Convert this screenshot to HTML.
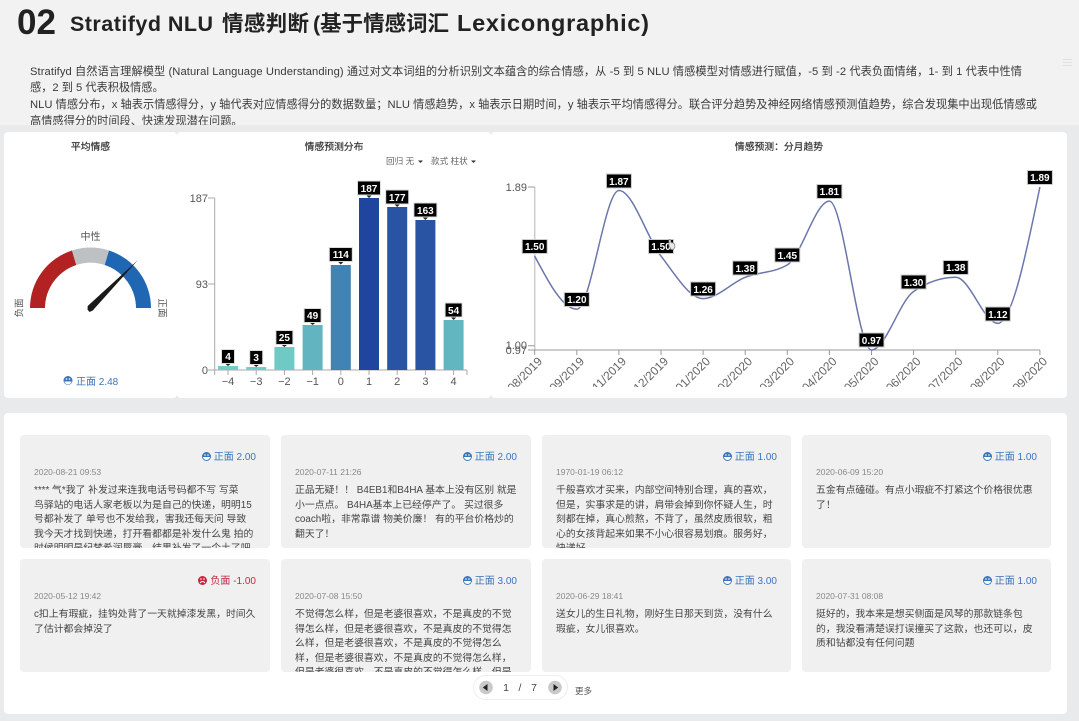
<!DOCTYPE html>
<html><head><meta charset="utf-8">
<style>
html,body{margin:0;padding:0;width:1079px;height:721px;overflow:hidden;background:#e9eaec}
body{font-family:"Liberation Sans","Noto Sans CJK SC",sans-serif;color:#333}
#r{position:relative;width:1079px;height:721px;overflow:hidden;filter:blur(.35px)}
.a{position:absolute;white-space:nowrap}
.top{left:0;top:0;width:1079px;height:125px;background:#f2f2f2;overflow:hidden}
.p{position:absolute;background:#fff;border-radius:4px}
.card{position:absolute;width:250px;height:113px;background:#f0f0f0;border-radius:4px;overflow:hidden}
.s{position:absolute;right:14px;top:16px;font-size:10px;line-height:13px;color:#3a75bd;white-space:nowrap}
.s svg{vertical-align:-1px;margin-right:3px}
.s.n{color:#c0293e}
.t{position:absolute;left:14px;top:31px;font-size:8.5px;line-height:12px;color:#888;white-space:nowrap}
.x{position:absolute;left:14px;top:49px;font-size:9.85px;line-height:14.6px;color:#444;white-space:nowrap}
</style></head><body>
<div id="r">
<div class="a top">
<svg class="a" style="left:0;top:0" width="1079" height="125" font-family="'Liberation Sans','Noto Sans CJK SC',sans-serif">
<text x="17" y="34" font-size="35" font-weight="700" fill="#222">02</text>
<g font-size="21.500" font-weight="700" fill="#222">
<text x="70" y="31" textLength="143" lengthAdjust="spacing">Stratifyd NLU</text>
<text x="222" y="31" textLength="87" lengthAdjust="spacing">情感判断</text>
<text x="313" y="31" textLength="136" lengthAdjust="spacing">(基于情感词汇</text>
<text x="457" y="31" font-size="23.500" textLength="192" lengthAdjust="spacing">Lexicongraphic)</text>
</g>
<g font-size="11.200" fill="#3a3a3a">
<text x="30" y="75" textLength="992" lengthAdjust="spacing">Stratifyd 自然语言理解模型 (Natural Language Understanding) 通过对文本词组的分析识别文本蕴含的综合情感，从 -5 到 5 NLU 情感模型对情感进行赋值，-5 到 -2 代表负面情绪，1- 到 1 代表中性情</text>
<text x="30" y="91">感，2 到 5 代表积极情感。</text>
<text x="30" y="108" textLength="1007" lengthAdjust="spacing">NLU 情感分布，x 轴表示情感得分，y 轴代表对应情感得分的数据数量；NLU 情感趋势，x 轴表示日期时间，y 轴表示平均情感得分。联合评分趋势及神经网络情感预测值趋势，综合发现集中出现低情感或</text>
<text x="30" y="124.500">高情感得分的时间段、快速发现潜在问题。</text>
</g>
<path d="M1063 59.500h9M1063 62.500h9M1063 65.500h9" stroke="#e0e0e0" stroke-width="1" fill="none"/>
</svg>
</div>

<div class="p" style="left:4px;top:132px;width:173px;height:266px"></div>
<div class="p" style="left:177px;top:132px;width:314px;height:266px"></div>
<div class="p" style="left:491px;top:132px;width:576px;height:266px"></div>
<div class="p" style="left:4px;top:413px;width:1063px;height:301px"></div>

<svg class="a" style="left:0;top:0" width="1079" height="410" font-family="'Liberation Sans','Noto Sans CJK SC',sans-serif">
<defs><clipPath id="c"><rect x="491" y="340" width="576" height="47"/></clipPath></defs>
<!-- titles -->
<g font-size="9.800" fill="#333" stroke="#333" stroke-width=".2" text-anchor="middle">
<text x="90.500" y="150">平均情感</text>
<text x="334" y="150">情感预测分布</text>
<text x="779" y="150">情感预测：分月趋势</text>
</g>
<text x="386" y="164" font-size="8.600" fill="#666">回归 无</text>
<path d="M418 160.500h5l-2.500 2.500z" fill="#333"/>
<text x="431" y="164" font-size="8.600" fill="#666">款式 柱状</text>
<path d="M471 160.500h5l-2.500 2.500z" fill="#333"/>

<!-- gauge -->
<path d="M30 308A60.500 60.500 0 0 1 72 250.500L76.300 265A45.500 45.500 0 0 0 45 308Z" fill="#b22222"/>
<path d="M72 250.500A60.500 60.500 0 0 1 109 250.500L104.700 265A45.500 45.500 0 0 0 76.300 265Z" fill="#bdc1c4"/>
<path d="M109 250.500A60.500 60.500 0 0 1 151 308H136A45.500 45.500 0 0 0 104.700 265Z" fill="#2067b3"/>
<path d="M138 260L92.700 310.500 89.500 312 87.500 309.500 87.700 306Z" fill="#1a1a1a"/>
<text x="90.500" y="240" font-size="10" fill="#555" text-anchor="middle">中性</text>
<text transform="translate(22.500 308) rotate(-90)" font-size="9.500" fill="#555" text-anchor="middle">负面</text>
<text transform="translate(159 308) rotate(90)" font-size="9.500" fill="#555" text-anchor="middle">正面</text>
<circle cx="68" cy="380.500" r="4.500" fill="#3a75bd"/><path d="M64.500 381.500h7a3.500 3 0 0 1-7 0z" fill="#fff"/><circle cx="66.500" cy="379" r=".8" fill="#fff"/><circle cx="69.500" cy="379" r=".8" fill="#fff"/>
<text x="76" y="385" font-size="10" fill="#3a75bd">正面 2.48</text>

<!-- bars -->
<path d="M214.700 198V370M208 198H214.700M208 284H214.700M208 370H467M228 370v5M256.200 370v5M284.400 370v5M312.600 370v5M340.800 370v5M369 370v5M397.200 370v5M425.400 370v5M453.600 370v5M214.700 370v5M467 370v5" stroke="#aaa" stroke-width="1" fill="none"/>
<g font-size="11" fill="#555" text-anchor="end"><text x="208" y="202">187</text><text x="208" y="288">93</text><text x="208" y="374">0</text></g>
<g font-size="11" fill="#555" text-anchor="middle"><text x="228" y="385">−4</text><text x="256.200" y="385">−3</text><text x="284.400" y="385">−2</text><text x="312.600" y="385">−1</text><text x="340.800" y="385">0</text><text x="369" y="385">1</text><text x="397.200" y="385">2</text><text x="425.400" y="385">3</text><text x="453.600" y="385">4</text></g>
<rect x="218" y="366" width="20" height="4" fill="#6fcfc7"/>
<rect x="246.200" y="367" width="20" height="3" fill="#6fcfc7"/>
<rect x="274.400" y="347" width="20" height="23" fill="#6fcac6"/>
<rect x="302.600" y="325" width="20" height="45" fill="#62b5c0"/>
<rect x="330.800" y="265" width="20" height="105" fill="#4183b3"/>
<rect x="359" y="198" width="20" height="172" fill="#1f459e"/>
<rect x="387.200" y="207" width="20" height="163" fill="#2854a3"/>
<rect x="415.400" y="220" width="20" height="150" fill="#2854a3"/>
<rect x="443.600" y="320" width="20" height="50" fill="#62b6c0"/>
<g stroke="#ddd" stroke-width="1" fill="#000">
<rect x="221.500" y="349.500" width="13" height="14"/><rect x="249.700" y="350.500" width="13" height="14"/>
<rect x="275.900" y="330.500" width="17" height="14"/><rect x="304.100" y="308.500" width="17" height="14"/>
<rect x="329.300" y="247.500" width="23" height="14"/><rect x="357.500" y="181" width="23" height="14"/>
<rect x="385.700" y="190" width="23" height="14"/><rect x="413.900" y="203" width="23" height="14"/>
<rect x="445.100" y="303" width="17" height="14"/>
</g>
<g fill="#222"><path d="M225.500 364h5l-2.500 2zM253.700 365h5l-2.500 2zM281.900 345h5l-2.500 2zM310.100 323h5l-2.500 2zM338.300 262h5l-2.500 2.500zM366.500 195.500h5l-2.500 2.500zM394.700 204.500h5l-2.500 2.500zM422.900 217.500h5l-2.500 2.500zM451.100 317.500h5l-2.500 2.500z"/></g>
<g font-size="10" font-weight="700" fill="#fff" text-anchor="middle">
<text x="228" y="360">4</text><text x="256.200" y="361">3</text><text x="284.400" y="341">25</text><text x="312.600" y="319">49</text><text x="340.800" y="258">114</text><text x="369" y="192">187</text><text x="397.200" y="201">177</text><text x="425.400" y="214">163</text><text x="453.600" y="314">54</text>
</g>

<!-- line chart -->
<path d="M534.700 187V350" stroke="#ccc" stroke-width="1.500" fill="none"/>
<path d="M528 187H534.700M528 345.700H534.700M528 350H1040" stroke="#999" stroke-width="1" fill="none"/>
<path d="M534.700 350v5M576.800 350v5M618.900 350v5M661 350v5M703.100 350v5M745.200 350v5M787.300 350v5M829.400 350v5M871.500 350v5M913.600 350v5M955.700 350v5M997.800 350v5M1039.900 350v5" stroke="#999" fill="none"/>
<g font-size="11" fill="#555" text-anchor="end"><text x="527" y="191">1.89</text><text x="527" y="349">1.00</text><text x="527" y="354">0.97</text></g>
<path d="M534.700 256.100C548.700 282.600 562.800 309.200 576.800 309.200C590.800 309.200 604.900 190.500 618.900 190.500C632.900 190.500 647 238.100 661 256.100C675 274.100 689.100 298.600 703.100 298.600C717.100 298.600 731.200 282.900 745.200 277.300C759.200 271.700 773.300 273.200 787.300 264.900C801.300 256.600 815.400 201.100 829.400 201.100C843.400 201.100 857.500 350 871.500 350C885.500 350 899.600 301 913.600 291.500C927.600 282 941.700 277.300 955.700 277.300C969.700 277.300 983.800 323.400 997.800 323.400C1011.800 323.400 1025.900 255.200 1039.900 187" stroke="#6b77ab" stroke-width="1.500" fill="none"/>
<g clip-path="url(#c)" font-size="12" fill="#666" text-anchor="end">
<text transform="translate(543 362) rotate(-45)">08/2019</text>
<text transform="translate(585 362) rotate(-45)">09/2019</text>
<text transform="translate(627 362) rotate(-45)">11/2019</text>
<text transform="translate(669 362) rotate(-45)">12/2019</text>
<text transform="translate(711 362) rotate(-45)">01/2020</text>
<text transform="translate(753 362) rotate(-45)">02/2020</text>
<text transform="translate(795 362) rotate(-45)">03/2020</text>
<text transform="translate(837.500 362) rotate(-45)">04/2020</text>
<text transform="translate(879.500 362) rotate(-45)">05/2020</text>
<text transform="translate(921.500 362) rotate(-45)">06/2020</text>
<text transform="translate(963.500 362) rotate(-45)">07/2020</text>
<text transform="translate(1005.500 362) rotate(-45)">08/2020</text>
<text transform="translate(1048 362) rotate(-45)">09/2020</text>
</g>
<g stroke="#ccc" stroke-width="1" fill="#000">
<rect x="522.200" y="239.500" width="25" height="14"/><rect x="564.300" y="292.500" width="25" height="14"/>
<rect x="606.400" y="174" width="25" height="14"/><rect x="648.500" y="239.500" width="25" height="14"/>
<rect x="690.600" y="282" width="25" height="14"/><rect x="732.700" y="261" width="25" height="14"/>
<rect x="774.800" y="248" width="25" height="14"/><rect x="816.900" y="184.500" width="25" height="14"/>
<rect x="859" y="333" width="25" height="14"/><rect x="901.100" y="275" width="25" height="14"/>
<rect x="943.200" y="260.500" width="25" height="14"/><rect x="985.300" y="307" width="25" height="14"/>
<rect x="1027.400" y="170.500" width="25" height="14"/>
</g>
<g font-size="10" font-weight="700" fill="#fff" text-anchor="middle">
<text x="534.700" y="250">1.50</text><text x="576.800" y="303">1.20</text><text x="618.900" y="185">1.87</text><text x="661" y="250">1.50</text><text x="703.100" y="293">1.26</text><text x="745.200" y="272">1.38</text><text x="787.300" y="259">1.45</text><text x="829.400" y="195">1.81</text><text x="871.500" y="344">0.97</text><text x="913.600" y="286">1.30</text><text x="955.700" y="271">1.38</text><text x="997.800" y="318">1.12</text><text x="1039.900" y="181">1.89</text>
</g>
<path d="M669 239.500l1.500 0 .5 3 2 .5 1.500 1 .5 3-1.500 2.500h-2.500l-2-4z" fill="#e8e8e8" stroke="#888" stroke-width=".8"/>
</svg>

<div class="card" style="left:20px;top:435px">
<div class="s"><svg width="9" height="9" viewBox="0 0 9 9"><circle cx="4.500" cy="4.500" r="4.500" fill="#3a75bd"/><path d="M1 5h7a3.500 3 0 0 1-7 0z" fill="#fff"/><circle cx="3" cy="3" r=".8" fill="#fff"/><circle cx="6" cy="3" r=".8" fill="#fff"/></svg>正面 2.00</div>
<div class="t">2020-08-21 09:53</div>
<div class="x">**** 气*我了 补发过来连我电话号码都不写 写菜<br>鸟驿站的电话人家老板以为是自己的快递，明明15<br>号都补发了 单号也不发给我，害我还每天问 导致<br>我今天才找到快递，打开看都都是补发什么鬼 拍的<br>时候明明是纪梵希润唇膏，结果补发了一个土了吧</div>
</div>
<div class="card" style="left:281px;top:435px">
<div class="s"><svg width="9" height="9" viewBox="0 0 9 9"><circle cx="4.500" cy="4.500" r="4.500" fill="#3a75bd"/><path d="M1 5h7a3.500 3 0 0 1-7 0z" fill="#fff"/><circle cx="3" cy="3" r=".8" fill="#fff"/><circle cx="6" cy="3" r=".8" fill="#fff"/></svg>正面 2.00</div>
<div class="t">2020-07-11 21:26</div>
<div class="x">正品无疑！！ B4EB1和B4HA 基本上没有区别 就是<br>小一点点。 B4HA基本上已经停产了。 买过很多<br>coach啦，非常靠谱 物美价廉！ 有的平台价格炒的<br>翻天了！</div>
</div>
<div class="card" style="left:542px;top:435px;width:249px">
<div class="s"><svg width="9" height="9" viewBox="0 0 9 9"><circle cx="4.500" cy="4.500" r="4.500" fill="#3a75bd"/><path d="M1 5h7a3.500 3 0 0 1-7 0z" fill="#fff"/><circle cx="3" cy="3" r=".8" fill="#fff"/><circle cx="6" cy="3" r=".8" fill="#fff"/></svg>正面 1.00</div>
<div class="t">1970-01-19 06:12</div>
<div class="x">千般喜欢才买来，内部空间特别合理，真的喜欢，<br>但是，实事求是的讲，肩带会掉到你怀疑人生，时<br>刻都在掉，真心煎熬，不背了，虽然皮质很软，粗<br>心的女孩背起来如果不小心很容易划痕。服务好，<br>快递好</div>
</div>
<div class="card" style="left:802px;top:435px;width:249px">
<div class="s"><svg width="9" height="9" viewBox="0 0 9 9"><circle cx="4.500" cy="4.500" r="4.500" fill="#3a75bd"/><path d="M1 5h7a3.500 3 0 0 1-7 0z" fill="#fff"/><circle cx="3" cy="3" r=".8" fill="#fff"/><circle cx="6" cy="3" r=".8" fill="#fff"/></svg>正面 1.00</div>
<div class="t">2020-06-09 15:20</div>
<div class="x">五金有点磕碰。有点小瑕疵不打紧这个价格很优惠<br>了！</div>
</div>

<div class="card" style="left:20px;top:559px">
<div class="s n"><svg width="9" height="9" viewBox="0 0 9 9"><circle cx="4.500" cy="4.500" r="4.500" fill="#c0293e"/><path d="M2.200 7a2.500 2.500 0 0 1 4.600 0" stroke="#fff" fill="none"/><circle cx="3" cy="3" r=".8" fill="#fff"/><circle cx="6" cy="3" r=".8" fill="#fff"/></svg>负面 -1.00</div>
<div class="t">2020-05-12 19:42</div>
<div class="x">c扣上有瑕疵，挂钩处背了一天就掉漆发黑，时间久<br>了估计都会掉没了</div>
</div>
<div class="card" style="left:281px;top:559px">
<div class="s"><svg width="9" height="9" viewBox="0 0 9 9"><circle cx="4.500" cy="4.500" r="4.500" fill="#3a75bd"/><path d="M1 5h7a3.500 3 0 0 1-7 0z" fill="#fff"/><circle cx="3" cy="3" r=".8" fill="#fff"/><circle cx="6" cy="3" r=".8" fill="#fff"/></svg>正面 3.00</div>
<div class="t">2020-07-08 15:50</div>
<div class="x">不觉得怎么样，但是老婆很喜欢，不是真皮的不觉<br>得怎么样，但是老婆很喜欢，不是真皮的不觉得怎<br>么样，但是老婆很喜欢，不是真皮的不觉得怎么<br>样，但是老婆很喜欢，不是真皮的不觉得怎么样，<br>但是老婆很喜欢，不是真皮的不觉得怎么样，但是</div>
</div>
<div class="card" style="left:542px;top:559px;width:249px">
<div class="s"><svg width="9" height="9" viewBox="0 0 9 9"><circle cx="4.500" cy="4.500" r="4.500" fill="#3a75bd"/><path d="M1 5h7a3.500 3 0 0 1-7 0z" fill="#fff"/><circle cx="3" cy="3" r=".8" fill="#fff"/><circle cx="6" cy="3" r=".8" fill="#fff"/></svg>正面 3.00</div>
<div class="t">2020-06-29 18:41</div>
<div class="x">送女儿的生日礼物，刚好生日那天到货，没有什么<br>瑕疵，女儿很喜欢。</div>
</div>
<div class="card" style="left:802px;top:559px;width:249px">
<div class="s"><svg width="9" height="9" viewBox="0 0 9 9"><circle cx="4.500" cy="4.500" r="4.500" fill="#3a75bd"/><path d="M1 5h7a3.500 3 0 0 1-7 0z" fill="#fff"/><circle cx="3" cy="3" r=".8" fill="#fff"/><circle cx="6" cy="3" r=".8" fill="#fff"/></svg>正面 1.00</div>
<div class="t">2020-07-31 08:08</div>
<div class="x">挺好的，我本来是想买侧面是风琴的那款链条包<br>的，我没看清楚误打误撞买了这款，也还可以，皮<br>质和钻都没有任何问题</div>
</div>

<svg class="a" style="left:460px;top:665px" width="150" height="50" font-family="'Liberation Sans','Noto Sans CJK SC',sans-serif">
<rect x="13.500" y="10.500" width="94" height="24" rx="12" fill="#fff" stroke="#eee"/>
<circle cx="26" cy="22.500" r="6.800" fill="#c9c9c9"/><path d="M22.800 22.500L27.500 19V26Z" fill="#222"/>
<circle cx="95" cy="22.500" r="6.800" fill="#c9c9c9"/><path d="M98.200 22.500L93.500 19V26Z" fill="#222"/>
<text x="46" y="26" font-size="10.500" fill="#444" text-anchor="middle">1</text>
<text x="60" y="26" font-size="10.500" fill="#444" text-anchor="middle">/</text>
<text x="74" y="26" font-size="10.500" fill="#444" text-anchor="middle">7</text>
<text x="115" y="29" font-size="8.500" fill="#555">更多</text>
</svg>
</div>
</body></html>
